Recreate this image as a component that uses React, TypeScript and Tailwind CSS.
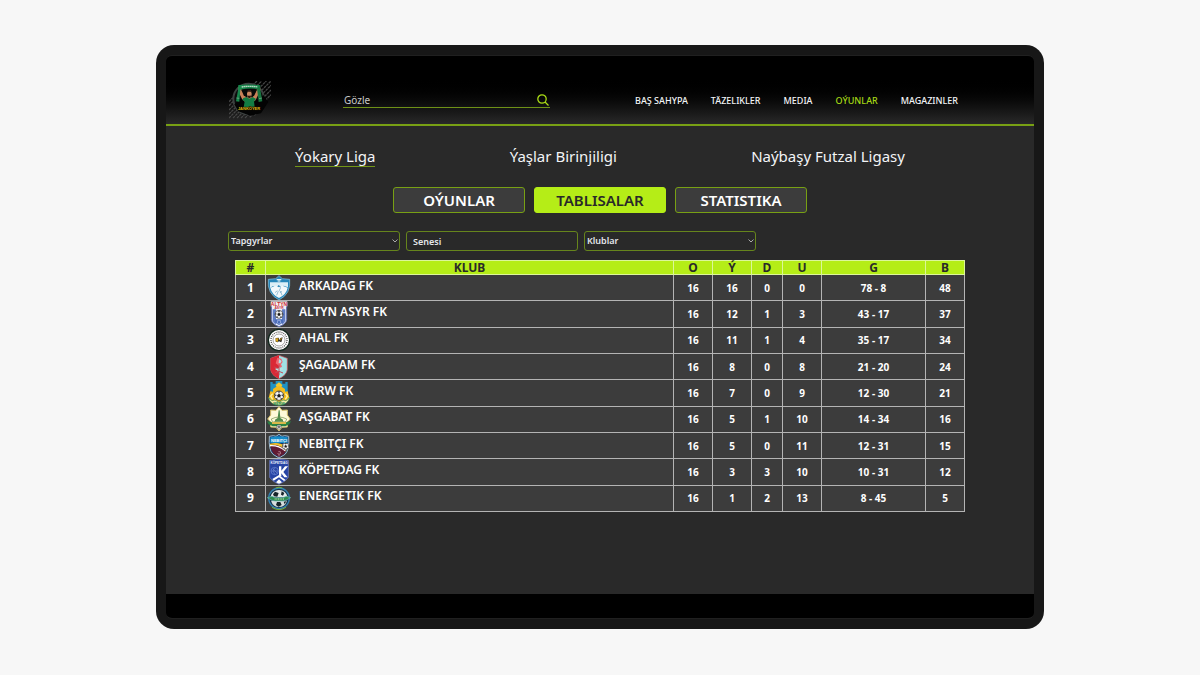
import type { ReactNode } from 'react';

const navLinks = ['BAŞ SAHYPA', 'TÄZELIKLER', 'MEDIA', 'OÝUNLAR', 'MAGAZINLER'];
const leagues = ['Ýokary Liga', 'Ýaşlar Birinjiligi', 'Naýbaşy Futzal Ligasy'];
const sections = ['OÝUNLAR', 'TABLISALAR', 'STATISTIKA'];

function Football({ x, y, r }: { x: number; y: number; r: number }) {
  return (
    <g transform={`translate(${x} ${y}) scale(${r / 10})`}>
      <circle r="10" fill="#f4f4f4" stroke="#222" strokeWidth="1.5" />
      <path d="M0-4 4-1 2.5 3.5h-5L-4-1Z M-4-9 4-9 0-6Z M9-4 9 3 6.500-1Z M-9-4-9 3-6.500-1Z M3 9 7 6 4 5Z M-3 9-7 6-4 5Z" fill="#1b1b1b" />
      <path d="M0-4V-6M4-1 6.500-1M-4-1-6.500-1M2.500 3.500 4 5M-2.500 3.500-4 5" stroke="#222" />
    </g>
  );
}

function Crest({ children }: { children: ReactNode }) {
  return (
    <svg viewBox="0 0 72 78" className="block h-[26px] w-6" aria-hidden="true">
      {children}
    </svg>
  );
}

const crests: Record<string, ReactNode> = {
  arkadag: (
    <Crest>
      <path d="M36 2 46 11 68 13Q73 56 36 75Q-1 56 4 13L26 11Z" fill="#2786b9" stroke="#8dc7e2" strokeWidth="2" />
      <path d="M9 22H63V37L50 32 43 37 35 30 27 38 18 33 9 39Z" fill="#dceef6" />
      <path d="M10 38 27 32 36 37 46 32 62 38Q58 58 36 69Q14 58 10 38Z" fill="#f3f8fb" />
      <path d="M38 33Q44 38 37 46Q43 50 45 61M31 47 24 53M34 48 29 61M39 54 44 48" fill="none" stroke="#6aa3c1" strokeWidth="2" />
      <path d="M29 14h14M32 18h8" stroke="#fff" strokeWidth="3" />
    </Crest>
  ),
  altyn: (
    <Crest>
      <path d="M13 4H59V56Q57 69 36 77Q15 69 13 56Z" fill="#eef1fa" stroke="#5d6cac" strokeWidth="3" />
      <path d="M17 25V59Q20 67 27 70V25M55 25V59Q52 67 45 70V25" fill="#5f7cc4" />
      <rect x="11" y="1" width="50" height="15" fill="#f6f1f0" />
      <text x="36" y="14" fontSize="15" fontWeight="900" textAnchor="middle" fill="#c92a32" fontFamily="Liberation Sans, sans-serif">ALTYN</text>
      <text x="36" y="24" fontSize="10" fontWeight="900" textAnchor="middle" fill="#c92a32" fontFamily="Liberation Sans, sans-serif">ASYR</text>
      <Football x={36} y={40} r={12} />
      <path d="M25 55H47V65L36 73 25 65Z" fill="#4568b7" />
      <path d="M31 59h10v7l-5 4-5-4Z" fill="none" stroke="#b9c8ee" strokeWidth="2" />
    </Crest>
  ),
  ahal: (
    <Crest>
      <circle cx="36" cy="39" r="32" fill="#fff" stroke="#12271d" strokeWidth="4" />
      <circle cx="36" cy="39" r="24" fill="none" stroke="#555" strokeWidth="4" strokeDasharray="3 3" />
      <circle cx="36" cy="39" r="18" fill="#fff" stroke="#777" strokeWidth="2" />
      <path d="M26 33 35 32 38 40 40 33 47 31 43 46 36 43 32 46 26 44Z" fill="#252522" />
      <path d="M26 34 35 34 32 45 26 43ZM40 35 45 32 41 42Z" fill="#d7a51e" />
    </Crest>
  ),
  sagadam: (
    <Crest>
      <path d="M36 4 61 13V47Q59 63 36 74Q13 63 11 47V13Z" fill="#9fe0e4" stroke="#d3474d" strokeWidth="2" />
      <path d="M36 4V74Q13 63 11 47V13Z" fill="#da2936" />
      <path d="M31 11 43 14 47 24 42 31 45 38 39 41 33 33 26 28Z" fill="#ee6670" />
      <path d="M36 15 44 21 40 28 35 27ZM26 43H47V48H26ZM29 52 36 44 43 52Z" fill="#b6e2e4" />
      <path d="M22 39 32 43M36 31V64M25 56 36 52 48 57" fill="none" stroke="#c24a57" strokeWidth="3" />
    </Crest>
  ),
  merw: (
    <Crest>
      <path d="M10 6H17V11H26V3H46V11H55V6H62V39L36 55 10 39Z" fill="#1f93c3" />
      <path d="M36 7 46 15 43 22H29L26 15Z" fill="#f3c72e" />
      <path d="M18 27Q36 10 54 27V35L62 34 67 54 51 72 36 67 21 72 5 54 10 34 18 35Z" fill="#f2bb1c" />
      <path d="M4 52Q10 76 36 76T68 52L57 62 48 60 36 67 24 60 15 62Z" fill="#f3e8a7" stroke="#338854" strokeWidth="2" />
      <text x="36" y="75" fontSize="11" fontWeight="900" textAnchor="middle" fill="#18864a" fontFamily="Liberation Sans, sans-serif">MERW</text>
      <Football x={36} y={47} r={14} />
      <path d="M17 41 11 48 17 58M55 41 61 48 55 58" fill="none" stroke="#fff0a5" strokeWidth="4" />
    </Crest>
  ),
  asgabat: (
    <Crest>
      <path d="M36 2 45 13 61 12 61 27 70 39 61 48 61 63 45 64 36 75 27 64 11 63 11 48 2 39 11 27 11 12 27 13Z" fill="#fff9d9" stroke="#d3bd68" strokeWidth="3" />
      <path d="M35 13H38L40 36 48 41V47H24V41L32 36Z" fill="#4e8b4c" />
      <path d="M13 39Q36 27 59 39L55 49Q36 39 17 49Z" fill="none" stroke="#718d4c" strokeWidth="2" />
      <path d="M0 46 13 48 20 54 52 54 59 48 72 46 67 55 55 61 17 61 5 55Z" fill="#298344" />
      <path d="M15 48H57V54H15Z" fill="#d9b84a" />
      <Football x={36} y={63} r={7} />
    </Crest>
  ),
  nebitci: (
    <Crest>
      <path d="M7 10 19 8 27 10 36 4 45 10 53 8 65 10Q68 51 54 64L36 75 18 64Q4 51 7 10Z" fill="#17376f" stroke="#9fbbcb" strokeWidth="3" />
      <path d="M10 13Q36 6 62 13V30H10Z" fill="#168bc8" />
      <text x="36" y="27" fontSize="12" fontWeight="900" textAnchor="middle" fill="#fff" fontFamily="Liberation Sans, sans-serif">NEBITÇI</text>
      <path d="M9 32Q36 25 60 41L57 57Q32 34 9 41Z" fill="#f2c62b" />
      <path d="M10 36Q36 32 57 52L52 63 36 72 20 62Q12 53 10 36Z" fill="#611b32" />
      <path d="M9 38Q34 36 55 53" fill="none" stroke="#fff" strokeWidth="4" />
      <Football x={56} y={40} r={10} />
      <path d="M34 56Q42 53 41 62Q33 67 32 60M36 64v7" fill="none" stroke="#caa1ad" strokeWidth="2" />
    </Crest>
  ),
  kopetdag: (
    <Crest>
      <path d="M8 4Q36-2 64 4V55Q59 66 36 76Q13 66 8 55Z" fill="#2744a4" stroke="#7684c9" strokeWidth="2" />
      <text x="36" y="16" fontSize="9" fontWeight="900" textAnchor="middle" fill="#f5f7ff" fontFamily="Liberation Sans, sans-serif">KÖPETDAG</text>
      <path d="M36 22H43V35L54 22H63L49 39 62 55H52L43 43V52H36Z" fill="#fff" />
      <circle cx="23" cy="36" r="11" fill="none" stroke="#6f8bd8" strokeWidth="2" />
      <path d="M13 36H34M23 26 18 36 24 47M18 30 31 43" fill="none" stroke="#7189cf" strokeWidth="2" />
      <path d="M16 60 36 48 56 63 51 66 36 55 20 65ZM27 70 36 61 45 70 36 74Z" fill="#fff" />
    </Crest>
  ),
  energetik: (
    <Crest>
      <circle cx="36" cy="40" r="31" fill="#18364c" stroke="#3280b0" strokeWidth="4" />
      <path d="M36 15A26 26 0 0 1 62 37H10A26 26 0 0 1 36 15" fill="#e3e9e9" />
      <path d="M24 20 35 24 31 35 21 34 18 28ZM44 19 52 24 48 32 42 29Z" fill="#17242a" />
      <path d="M12 47H60Q54 66 36 66T12 47" fill="#d5dddd" />
      <path d="M30 51 40 51 44 60 35 65 27 60ZM50 50 58 49 53 58Z" fill="#15232a" />
      <path d="M1 38 15 34 25 38H48L58 34 71 38 58 45 48 48H25L15 46Z" fill="#2d8a4e" stroke="#6ab7b6" strokeWidth="2" />
      <path d="M23 42H51" stroke="#d2efbf" strokeWidth="3" strokeDasharray="3 2" />
      <path d="M26 9Q36 4 46 9M15 67Q36 81 57 67" fill="none" stroke="#77ae39" strokeWidth="3" />
    </Crest>
  ),
};

const rows = [
  { club: 'ARKADAG FK', crest: 'arkadag', values: ['16', '16', '0', '0', '78 - 8', '48'] },
  { club: 'ALTYN ASYR FK', crest: 'altyn', values: ['16', '12', '1', '3', '43 - 17', '37'] },
  { club: 'AHAL FK', crest: 'ahal', values: ['16', '11', '1', '4', '35 - 17', '34'] },
  { club: 'ŞAGADAM FK', crest: 'sagadam', values: ['16', '8', '0', '8', '21 - 20', '24'] },
  { club: 'MERW FK', crest: 'merw', values: ['16', '7', '0', '9', '12 - 30', '21'] },
  { club: 'AŞGABAT FK', crest: 'asgabat', values: ['16', '5', '1', '10', '14 - 34', '16'] },
  { club: 'NEBITÇI FK', crest: 'nebitci', values: ['16', '5', '0', '11', '12 - 31', '15'] },
  { club: 'KÖPETDAG FK', crest: 'kopetdag', values: ['16', '3', '3', '10', '10 - 31', '12'] },
  { club: 'ENERGETIK FK', crest: 'energetik', values: ['16', '1', '2', '13', '8 - 45', '5'] },
];

function Logo() {
  return (
    <svg viewBox="0 0 126 114" className="block h-[38px] w-[42px]" role="img" aria-label="Janköýer">
      <g stroke="#454545" strokeWidth="4" strokeDasharray="8 2">
        <path d="M0 62 12 50M0 74 17 57M0 87 24 63M0 99 31 68M0 111 38 73M12 111 49 74M24 111 60 75M36 111 70 77M48 111 80 79M62 109 93 78M76 103 102 77M64 20 84 0M76 22 98 0M88 24 112 0M98 28 126 0M103 36 126 13M107 46 126 27M109 58 126 41" />
      </g>
      <circle cx="59" cy="54" r="46" fill="#0c0c0c" stroke="#3c4140" strokeWidth="6" />
      <path d="M16 70 28 91 64 104 96 97 118 63 103 42 91 58 40 48Z" fill="#030303" />
      <path d="M28 17 37 25 46 43 60 49 75 42 85 22 93 17 94 28 80 57 72 64H49L39 54 27 29Z" fill="#c98258" />
      <path d="M37 27Q61 22 84 26L76 43 70 49H52L44 43Z" fill="#080a09" />
      <path d="M28 12Q60 8 94 13L93 25Q61 20 34 26L31 62 21 61 27 28Z" fill="#17864b" />
      <path d="M92 14 100 61 89 63 84 22Z" fill="#17753f" />
      <path d="M38 18Q61 14 86 18" fill="none" stroke="#b6d5c0" strokeWidth="4" strokeDasharray="5 1" />
      <path d="M22 51 31 52M90 53 99 51" stroke="#85b899" strokeWidth="2" />
      <path d="M43 51 53 48 61 53 71 48 81 54 75 61 77 79H44L47 61 40 57Z" fill="#137c43" />
      <ellipse cx="61" cy="39" rx="7" ry="11" fill="#c88760" />
      <path d="M54 37Q52 27 60 27Q69 27 68 37L65 32H56ZM55 43Q61 46 67 43L65 49 61 52 57 49Z" fill="#29170f" />
      <text x="60" y="88" fontSize="12" fontWeight="900" textAnchor="middle" fill="#dcb316" stroke="#171100" strokeWidth="2" paintOrder="stroke" fontFamily="Liberation Sans, sans-serif">JANKÖÝER</text>
    </svg>
  );
}

function FilterSelect({ label }: { label: string }) {
  return (
    <div className="relative w-[172px]">
      <select aria-label={label} className="block h-5 w-full appearance-none rounded-[3px] border border-[#66851c] bg-transparent px-0.5 text-[9px] font-semibold text-gray-200">
        <option>{label}</option>
      </select>
      <svg viewBox="0 0 6 4" className="pointer-events-none absolute top-2 right-0.5 h-1 w-1.5" fill="none" stroke="#aaa" aria-hidden="true">
        <path d="m.5.5 2.500 2.500L5.500.5" />
      </svg>
    </div>
  );
}

export default function App() {
  return (
    <div className="flex min-h-screen justify-center bg-[#f7f7f7] pt-[45px] pb-[46px] font-['Noto_Sans',sans-serif]">
      <div className="flex w-[74%] min-w-[800px] flex-col rounded-[18px] bg-[#171717] p-2.5">
        <div className="flex flex-1 flex-col overflow-hidden rounded-md border-y border-[#202020] bg-[#292929]">
          <header className="flex h-[70px] items-center border-b-2 border-[#78a014] bg-linear-to-b from-black from-30% to-[#292929] pt-5 pr-[76px] pl-[63px]">
            <a href="#home"><Logo /></a>
            <form className="ml-[72px] flex h-4 w-[207px] items-center border-b border-[#6e9117]">
              <input aria-label="Gözle" type="search" placeholder="Gözle" className="h-full min-w-0 flex-1 bg-transparent pl-px text-[10px] leading-4 text-white outline-none placeholder:text-[#cacaca]" />
              <button type="submit" aria-label="Gözle" className="mr-px">
                <svg viewBox="0 0 12 12" className="block size-3" fill="none" stroke="#a9dc15" strokeWidth="1.3">
                  <circle cx="5" cy="5" r="4.200" />
                  <path d="m8 8 3.500 3.500" />
                </svg>
              </button>
            </form>
            <nav className="ml-auto flex gap-[23px] pt-0.5 text-[9px] leading-4 font-medium text-gray-100">
              {navLinks.map((item, index) => (
                <a key={item} href={`#nav-${index}`} className={index === 3 ? 'whitespace-nowrap text-[#a5d815]' : 'whitespace-nowrap'}>{item}</a>
              ))}
            </nav>
          </header>

          <main className="flex-1 px-[62px] pt-5">
            <nav className="flex justify-around text-[15px] leading-5 text-gray-100">
              {leagues.map((item, index) => (
                <a key={item} href={`#league-${index}`} className={index === 0 ? 'border-b border-[#729517]' : 'border-b border-transparent'}>{item}</a>
              ))}
            </nav>

            <div className="mt-5 flex justify-center gap-[9px]">
              {sections.map((item, index) => (
                <button
                  key={item}
                  type="button"
                  className={
                    index === 1
                      ? 'h-[26px] w-[132px] rounded-[3px] border border-[#b5ed17] bg-[#b5ed17] text-[15px] leading-5 font-semibold text-[#292929]'
                      : 'h-[26px] w-[132px] rounded-[3px] border border-[#78a014] bg-[#3c3c3c] text-[15px] leading-5 font-semibold text-white'
                  }
                >
                  {item}
                </button>
              ))}
            </div>

            <div className="mt-[18px] flex gap-1.5">
              <FilterSelect label="Tapgyrlar" />
              <input aria-label="Senesi" type="text" placeholder="Senesi" className="block h-5 w-[172px] rounded-[3px] border border-[#66851c] bg-transparent px-1.5 text-[9px] font-semibold text-gray-200 placeholder:text-gray-200" />
              <FilterSelect label="Klublar" />
            </div>

            <div className="px-[7px] pt-[9px]">
              <table className="h-[252px] w-full table-fixed border-collapse text-center text-white">
                <colgroup>
                  <col className="w-[30px]" />
                  <col />
                  <col className="w-[39px]" />
                  <col className="w-[39px]" />
                  <col className="w-[31px]" />
                  <col className="w-[39px]" />
                  <col className="w-[104px]" />
                  <col className="w-[39px]" />
                </colgroup>
                <thead className="bg-[#b5ed17] text-[12px] leading-[13px] font-bold text-[#292929]">
                  <tr className="h-3.5">
                    {['#', 'KLUB', 'O', 'Ý', 'D', 'U', 'G', 'B'].map((heading) => (
                      <th key={heading} scope="col" className="border border-[#dcf69a] p-0">{heading}</th>
                    ))}
                  </tr>
                </thead>
                <tbody className="bg-[#3c3c3c]">
                  {rows.map((row, index) => (
                    <tr key={row.club}>
                      <td className="border border-[#b4b4b4] p-0 text-[12px] leading-4 font-bold">{index + 1}</td>
                      <td className="border border-[#b4b4b4] p-0">
                        <div className="flex h-[25px] items-center gap-2 pl-px">
                          {crests[row.crest]}
                          <span className="pb-1 text-[12px] leading-4 font-semibold">{row.club}</span>
                        </div>
                      </td>
                      {row.values.map((value, column) => (
                        <td key={column} className="border border-[#b4b4b4] p-0 text-[10px] leading-4 font-bold">{value}</td>
                      ))}
                    </tr>
                  ))}
                </tbody>
              </table>
            </div>
          </main>
          <footer className="h-6 bg-black" />
        </div>
      </div>
    </div>
  );
}
